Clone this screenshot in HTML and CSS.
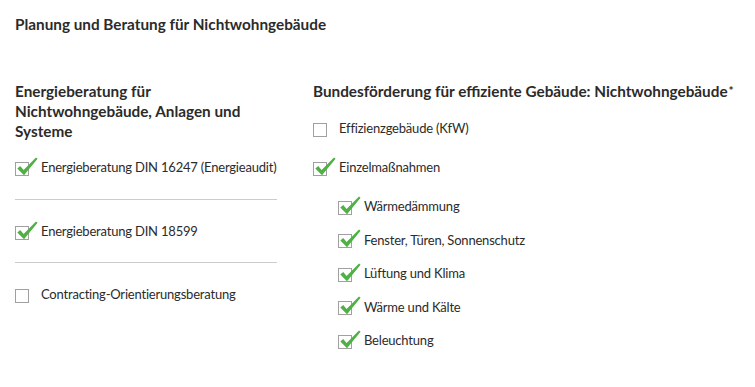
FILE: index.html
```html
<!DOCTYPE html>
<html lang="de">
<head>
<meta charset="utf-8">
<title>Planung und Beratung</title>
<link rel="stylesheet" href="styles.css">
</head>
<body>
<div class="page">
  <h1 class="title">Planung und Beratung für Nichtwohngebäude</h1>
  <div class="columns">
    <section class="col">
      <h2 class="heading">Energieberatung für Nichtwohngebäude, Anlagen und Systeme</h2>
      <ul class="list divided">
        <li class="item"><span class="box checked"><svg class="tick" viewBox="0 0 22 22" width="22" height="22"><path d="M1.3 11.6 L4.2 9 L7.6 13 L20 0.4 L21.6 1.8 L8 18.2 Z"/></svg></span><span class="label">Energieberatung DIN 16247 (Energieaudit)</span></li>
        <li class="item"><span class="box checked"><svg class="tick" viewBox="0 0 22 22" width="22" height="22"><path d="M1.3 11.6 L4.2 9 L7.6 13 L20 0.4 L21.6 1.8 L8 18.2 Z"/></svg></span><span class="label">Energieberatung DIN 18599</span></li>
        <li class="item"><span class="box"></span><span class="label">Contracting-Orientierungsberatung</span></li>
      </ul>
    </section>
    <section class="col">
      <h2 class="heading">Bundesförderung für effiziente Gebäude: Nichtwohngebäude<span class="star">*</span></h2>
      <ul class="list plain">
        <li class="item"><span class="box"></span><span class="label">Effizienzgebäude (KfW)</span></li>
        <li class="item"><span class="box checked"><svg class="tick" viewBox="0 0 22 22" width="22" height="22"><path d="M1.3 11.6 L4.2 9 L7.6 13 L20 0.4 L21.6 1.8 L8 18.2 Z"/></svg></span><span class="label">Einzelmaßnahmen</span></li>
      </ul>
      <ul class="list sub">
        <li class="item"><span class="box checked"><svg class="tick" viewBox="0 0 22 22" width="22" height="22"><path d="M1.3 11.6 L4.2 9 L7.6 13 L20 0.4 L21.6 1.8 L8 18.2 Z"/></svg></span><span class="label">Wärmedämmung</span></li>
        <li class="item"><span class="box checked"><svg class="tick" viewBox="0 0 22 22" width="22" height="22"><path d="M1.3 11.6 L4.2 9 L7.6 13 L20 0.4 L21.6 1.8 L8 18.2 Z"/></svg></span><span class="label">Fenster, Türen, Sonnenschutz</span></li>
        <li class="item"><span class="box checked"><svg class="tick" viewBox="0 0 22 22" width="22" height="22"><path d="M1.3 11.6 L4.2 9 L7.6 13 L20 0.4 L21.6 1.8 L8 18.2 Z"/></svg></span><span class="label">Lüftung und Klima</span></li>
        <li class="item"><span class="box checked"><svg class="tick" viewBox="0 0 22 22" width="22" height="22"><path d="M1.3 11.6 L4.2 9 L7.6 13 L20 0.4 L21.6 1.8 L8 18.2 Z"/></svg></span><span class="label">Wärme und Kälte</span></li>
        <li class="item"><span class="box checked"><svg class="tick" viewBox="0 0 22 22" width="22" height="22"><path d="M1.3 11.6 L4.2 9 L7.6 13 L20 0.4 L21.6 1.8 L8 18.2 Z"/></svg></span><span class="label">Beleuchtung</span></li>
      </ul>
    </section>
  </div>
</div>
</body>
</html>
```

FILE: styles.css
```css
html, body {
  margin: 0;
  padding: 0;
  background: #ffffff;
}
body {
  font-family: "Lato", "Noto Sans", sans-serif;
  color: #2b2b2b;
}
.page {
  padding: 14px 15px 0 15px;
}
.title {
  margin: 0;
  font-size: 15.3px;
  line-height: 20px;
  font-weight: 700;
  color: #2b2b2b;
}
.columns {
  display: grid;
  grid-template-columns: 262px 1fr;
  column-gap: 36px;
  margin-top: 47px;
}
.heading {
  margin: 0;
  font-size: 15.3px;
  line-height: 20px;
  font-weight: 700;
  color: #2b2b2b;
}
.star {
  font-size: 12px;
  vertical-align: 2px;
  margin-left: 1px;
}
.list {
  list-style: none;
  margin: 0;
  padding: 0;
}
.item {
  display: flex;
  align-items: center;
  font-size: 13px;
  letter-spacing: -0.2px;
  line-height: 20px;
}
.divided .item {
  padding: 21px 0;
  border-bottom: 1px solid #cccccc;
}
.divided .item:first-child {
  padding-top: 16px;
  padding-bottom: 22px;
}
.divided .item:last-child {
  border-bottom: none;
}
.plain {
  display: flex;
  flex-direction: column;
  gap: 19px;
  margin-top: 17px;
}
.sub {
  display: flex;
  flex-direction: column;
  gap: 13.5px;
  margin-top: 19px;
  padding-left: 25px;
}
.box {
  position: relative;
  flex: none;
  width: 12px;
  height: 12px;
  border: 1px solid #a0a0a0;
  background: #ffffff;
  margin-top: 3px;
  margin-right: 12px;
}
.tick {
  position: absolute;
  left: 0;
  top: -6px;
  fill: #4fb043;
}
.label {
  white-space: nowrap;
}
```
